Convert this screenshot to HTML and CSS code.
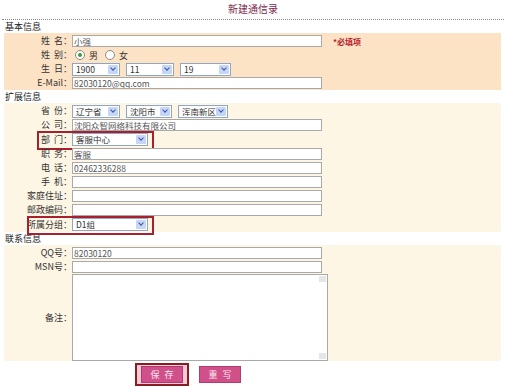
FILE: index.html
```html
<!DOCTYPE html>
<html lang="zh">
<head>
  <meta charset="UTF-8" />
  <title>新建通信录</title>
  <link rel="stylesheet" href="styles.css">
</head>
<body>
  <div class="title">新建通信录</div>

  <!-- 基本信息 -->
  <div class="section">基本信息</div>
  <div class="panel basic">
    <div class="row">
      <label>姓&nbsp;&nbsp;名：</label>
      <div class="field"><span class="input">小强</span><span class="req">*必填项</span></div>
    </div>
    <div class="row">
      <label>姓&nbsp;&nbsp;别：</label>
      <div class="field radios">
        <span class="radio on"></span><span>男</span>
        <span class="radio"></span><span>女</span>
      </div>
    </div>
    <div class="row">
      <label>生&nbsp;&nbsp;日：</label>
      <div class="field">
        <span class="sel w48">1900<i></i></span>
        <span class="sel w48">11<i></i></span>
        <span class="sel w51">19<i></i></span>
      </div>
    </div>
    <div class="row">
      <label>E-Mail：</label>
      <div class="field"><span class="input">82030120@qq.com</span></div>
    </div>
  </div>

  <!-- 扩展信息 -->
  <div class="section">扩展信息</div>
  <div class="panel">
    <div class="row">
      <label>省&nbsp;&nbsp;份：</label>
      <div class="field">
        <span class="sel w48">辽宁省<i></i></span>
        <span class="sel w46">沈阳市<i></i></span>
        <span class="sel w50">浑南新区<i></i></span>
      </div>
    </div>
    <div class="row">
      <label>公&nbsp;&nbsp;司：</label>
      <div class="field"><span class="input">沈阳众智网络科技有限公司</span></div>
    </div>
    <div class="row tall mark">
      <label>部&nbsp;&nbsp;门：</label>
      <div class="field"><span class="sel w76">客服中心<i></i></span></div>
    </div>
    <div class="row">
      <label>职&nbsp;&nbsp;务：</label>
      <div class="field"><span class="input">客服</span></div>
    </div>
    <div class="row">
      <label>电&nbsp;&nbsp;话：</label>
      <div class="field"><span class="input">02462336288</span></div>
    </div>
    <div class="row">
      <label>手&nbsp;&nbsp;机：</label>
      <div class="field"><span class="input"></span></div>
    </div>
    <div class="row">
      <label>家庭住址：</label>
      <div class="field"><span class="input"></span></div>
    </div>
    <div class="row">
      <label>邮政编码：</label>
      <div class="field"><span class="input"></span></div>
    </div>
    <div class="row tall mark wide">
      <label>所属分组：</label>
      <div class="field"><span class="sel w76">D1组<i></i></span></div>
    </div>
  </div>

  <!-- 联系信息 -->
  <div class="section">联系信息</div>
  <div class="panel">
    <div class="row">
      <label>QQ号：</label>
      <div class="field"><span class="input">82030120</span></div>
    </div>
    <div class="row">
      <label>MSN号：</label>
      <div class="field"><span class="input"></span></div>
    </div>
    <div class="row memo">
      <label>备注：</label>
      <div class="field"><span class="textarea"><b class="up"></b><b class="down"></b></span></div>
    </div>
  </div>

  <div class="buttons">
    <span class="btn-focus"><span class="btn">保存</span></span>
    <span class="btn">重写</span>
  </div>
</body>
</html>
```

FILE: styles.css
```css
body {
  margin: 0;
  padding: 0 5px 0 4px;
  font-family: "Noto Sans CJK SC", "DejaVu Sans", sans-serif;
  font-size: 9px;
  color: #333;
  background: #fff;
}

.title {
  height: 19px;
  line-height: 17px;
  text-align: center;
  font-size: 10px;
  color: #7d2a4b;
  border-bottom: 1px dotted #888;
  margin: 0 -3px 0 -2px;
}

.section {
  height: 13px;
  line-height: 14px;
  font-size: 9px;
  color: #222;
  padding-left: 1px;
}

.panel {
  background: #fef6e4;
  padding: 1px 0 0;
}

.panel.basic {
  background: #fde3c6;
}

.row {
  display: grid;
  grid-template-columns: 68px 1fr;
  height: 14px;
  align-items: center;
  position: relative;
}

.row.tall {
  height: 15px;
}

.row label {
  text-align: right;
  white-space: nowrap;
  color: #333;
  line-height: 12px;
}

.field {
  display: flex;
  align-items: center;
  gap: 6px;
}

.input {
  display: block;
  box-sizing: border-box;
  width: 250px;
  height: 12px;
  line-height: 10px;
  border: 1px solid #a9a9a9;
  background: #fff;
  color: #555;
  font-size: 8.5px;
  padding-left: 1px;
  overflow: hidden;
}

.req {
  margin-left: 5px;
  color: #b4202c;
  font-weight: bold;
  font-size: 8px;
}

.radios {
  gap: 4px;
}

.radio {
  width: 8px;
  height: 8px;
  border: 1px solid #8a8a8a;
  border-radius: 50%;
  background: #fff;
  position: relative;
  margin-left: 3px;
}

.radio.on::after {
  content: "";
  position: absolute;
  left: 2px;
  top: 2px;
  width: 4px;
  height: 4px;
  border-radius: 50%;
  background: #3a9a3a;
}

.sel {
  position: relative;
  display: block;
  box-sizing: border-box;
  height: 13px;
  line-height: 11px;
  border: 1px solid #8fa6c4;
  background: #fff;
  font-size: 8.5px;
  padding-left: 3px;
  color: #333;
}

.sel i {
  position: absolute;
  right: 1px;
  top: 1px;
  width: 10px;
  height: 9px;
  background: #c6d6f7;
  border-radius: 1px;
}

.sel i::after {
  content: "";
  position: absolute;
  left: 3px;
  top: 1px;
  width: 3px;
  height: 3px;
  border-right: 1.5px solid #3a55a0;
  border-bottom: 1.5px solid #3a55a0;
  transform: rotate(45deg);
}

.w46 { width: 46px; }
.w48 { width: 48px; }
.w50 { width: 50px; }
.w51 { width: 51px; }
.w76 { width: 76px; }

.row.mark::after {
  content: "";
  position: absolute;
  left: 33px;
  top: -1px;
  width: 113px;
  height: 15px;
  border: 2px solid #a8202e;
  pointer-events: none;
}

.row.mark.wide::after {
  left: 23px;
  width: 123px;
}

.row.memo {
  height: 87px;
}

.textarea {
  position: relative;
  display: block;
  box-sizing: border-box;
  width: 256px;
  height: 87px;
  border: 1px solid #a9a9a9;
  background: #fff;
}

.textarea b {
  position: absolute;
  right: 1px;
  width: 7px;
  height: 6px;
  background: #e6e6e6;
}

.textarea .up { top: 1px; }
.textarea .down { bottom: 1px; }

.buttons {
  display: flex;
  align-items: center;
  gap: 10px;
  padding: 2px 0 0 131px;
}

.btn-focus {
  display: block;
  border: 2px solid #8a1c24;
  padding: 1px 4px;
  background: #f4c9d8;
}

.btn {
  display: block;
  width: 40px;
  height: 15px;
  line-height: 15px;
  text-align: center;
  background: #d0508a;
  color: #fde7ef;
  font-size: 9px;
  letter-spacing: 5px;
  text-indent: 5px;
  border: 1px solid #b63a6e;
}
```
